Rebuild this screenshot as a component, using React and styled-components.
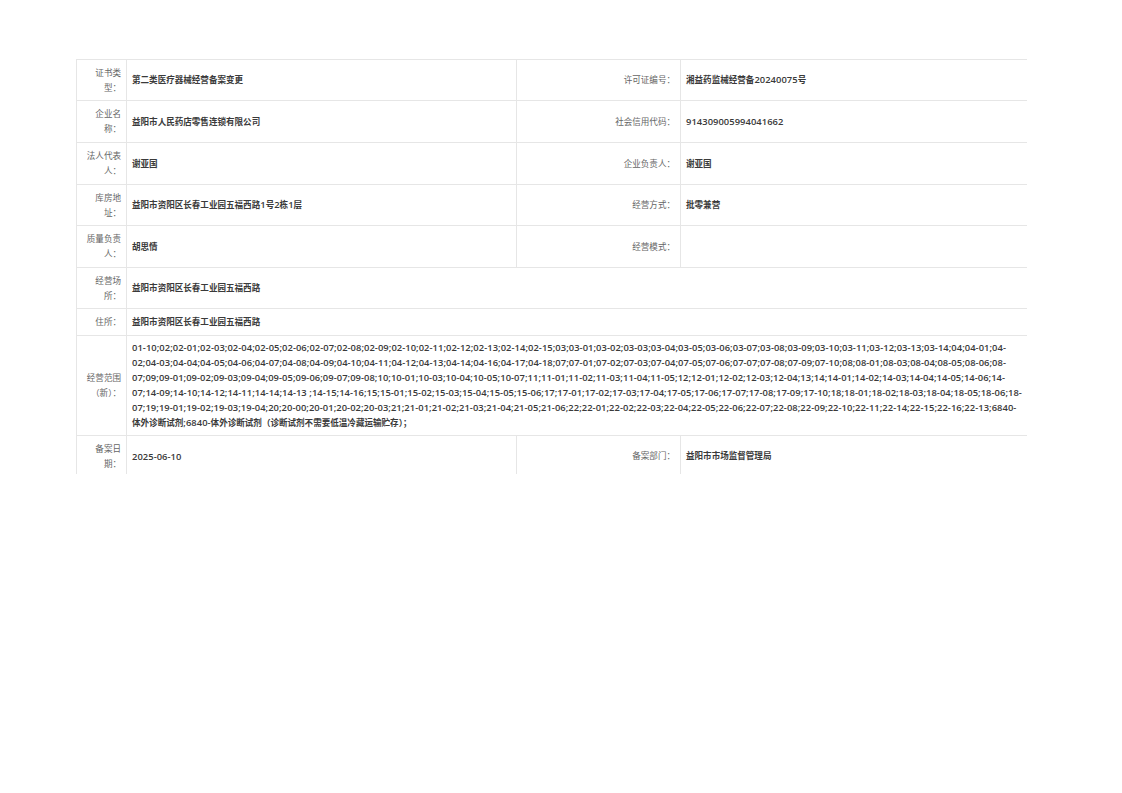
import React from "react";
import styled, { createGlobalStyle } from "styled-components";

const GlobalStyle = createGlobalStyle`
  html, body {
    margin: 0;
    padding: 0;
    background: #fff;
  }
`;

const scope =
  "01-10;02;02-01;02-03;02-04;02-05;02-06;02-07;02-08;02-09;02-10;02-11;02-12;02-13;02-14;02-15;03;03-01;03-02;03-03;03-04;03-05;03-06;03-07;03-08;03-09;03-10;03-11;03-12;03-13;03-14;04;04-01;04-02;04-03;04-04;04-05;04-06;04-07;04-08;04-09;04-10;04-11;04-12;04-13;04-14;04-16;04-17;04-18;07;07-01;07-02;07-03;07-04;07-05;07-06;07-07;07-08;07-09;07-10;08;08-01;08-03;08-04;08-05;08-06;08-07;09;09-01;09-02;09-03;09-04;09-05;09-06;09-07;09-08;10;10-01;10-03;10-04;10-05;10-07;11;11-01;11-02;11-03;11-04;11-05;12;12-01;12-02;12-03;12-04;13;14;14-01;14-02;14-03;14-04;14-05;14-06;14-07;14-09;14-10;14-12;14-11;14-14;14-13 ;14-15;14-16;15;15-01;15-02;15-03;15-04;15-05;15-06;17;17-01;17-02;17-03;17-04;17-05;17-06;17-07;17-08;17-09;17-10;18;18-01;18-02;18-03;18-04;18-05;18-06;18-07;19;19-01;19-02;19-03;19-04;20;20-00;20-01;20-02;20-03;21;21-01;21-02;21-03;21-04;21-05;21-06;22;22-01;22-02;22-03;22-04;22-05;22-06;22-07;22-08;22-09;22-10;22-11;22-14;22-15;22-16;22-13;6840-体外诊断试剂;6840-体外诊断试剂（诊断试剂不需要低温冷藏运输贮存）；";

const rows = [
  { h: 41, label: "证书类型：", value: "第二类医疗器械经营备案变更", label2: "许可证编号：", value2: "湘益药监械经营备20240075号" },
  { h: 42, label: "企业名称：", value: "益阳市人民药店零售连锁有限公司", label2: "社会信用代码：", value2: "914309005994041662" },
  { h: 42, label: "法人代表人：", value: "谢亚国", label2: "企业负责人：", value2: "谢亚国" },
  { h: 41, label: "库房地址：", value: "益阳市资阳区长春工业园五福西路1号2栋1层", label2: "经营方式：", value2: "批零兼营" },
  { h: 42, label: "质量负责人：", value: "胡思情", label2: "经营模式：", value2: "" },
  { h: 41, label: "经营场所：", value: "益阳市资阳区长春工业园五福西路" },
  { h: 27, label: "住所：", value: "益阳市资阳区长春工业园五福西路" },
  { h: 100, label: "经营范围（新）：", value: scope },
  { h: 41, label: "备案日期：", value: "2025-06-10", label2: "备案部门：", value2: "益阳市市场监督管理局" },
];

// digits run larger than the Chinese text in the original, so split by script
const Mixed = ({ text }) =>
  text.split(/([\u3000-\u9fff\uff00-\uffef]+)/).map((part, i) =>
    i % 2 ? <Han key={i}>{part}</Han> : part
  );

const App = () => {
  return (
    <Page>
      <GlobalStyle />
      <Clip>
        <Table>
          <colgroup>
            <col style={{ width: 50 }} />
            <col style={{ width: 390 }} />
            <col style={{ width: 164 }} />
            <col />
          </colgroup>
          <tbody>
            {rows.map((row) => (
              <Row key={row.label} $h={row.h}>
                <Label>{row.label}</Label>
                {row.label2 ? (
                  <>
                    <Value><Mixed text={row.value} /></Value>
                    <Label>{row.label2}</Label>
                    <Value><Mixed text={row.value2} /></Value>
                  </>
                ) : (
                  <Value colSpan={3}><Mixed text={row.value} /></Value>
                )}
              </Row>
            ))}
          </tbody>
        </Table>
      </Clip>
    </Page>
  );
};

export default App;

const Page = styled.div`
  padding: 59px 0 0 76px;
  width: 951px;
  font-family: "Open Sans", "Noto Sans CJK SC", sans-serif;
  font-size: 8.56px;
  line-height: 15px;
`;
const Clip = styled.div`
  height: 415px;
  overflow: hidden;
`;
const Table = styled.table`
  width: 100%;
  table-layout: fixed;
  border-collapse: collapse;
  border-top: 1px solid #e6e6e6;
  border-left: 1px solid #e6e6e6;
`;
const Row = styled.tr`
  height: ${(p) => p.$h}px;
`;
const Label = styled.td`
  padding: 1px 5px 0;
  text-align: right;
  color: #666;
  border-bottom: 1px solid #e6e6e6;
  border-right: 1px solid #e6e6e6;
`;
const Value = styled.td`
  padding: 0 5px;
  color: #3a3a3a;
  font-size: 9.4px;
  font-weight: 600;
  letter-spacing: 0.05px;
  overflow-wrap: break-word;
  border-bottom: 1px solid #e6e6e6;
  border-right: 1px solid #e6e6e6;
  &:last-child {
    border-right: none;
  }
`;
const Han = styled.span`
  font-size: 8.56px;
  letter-spacing: 0;
`;
